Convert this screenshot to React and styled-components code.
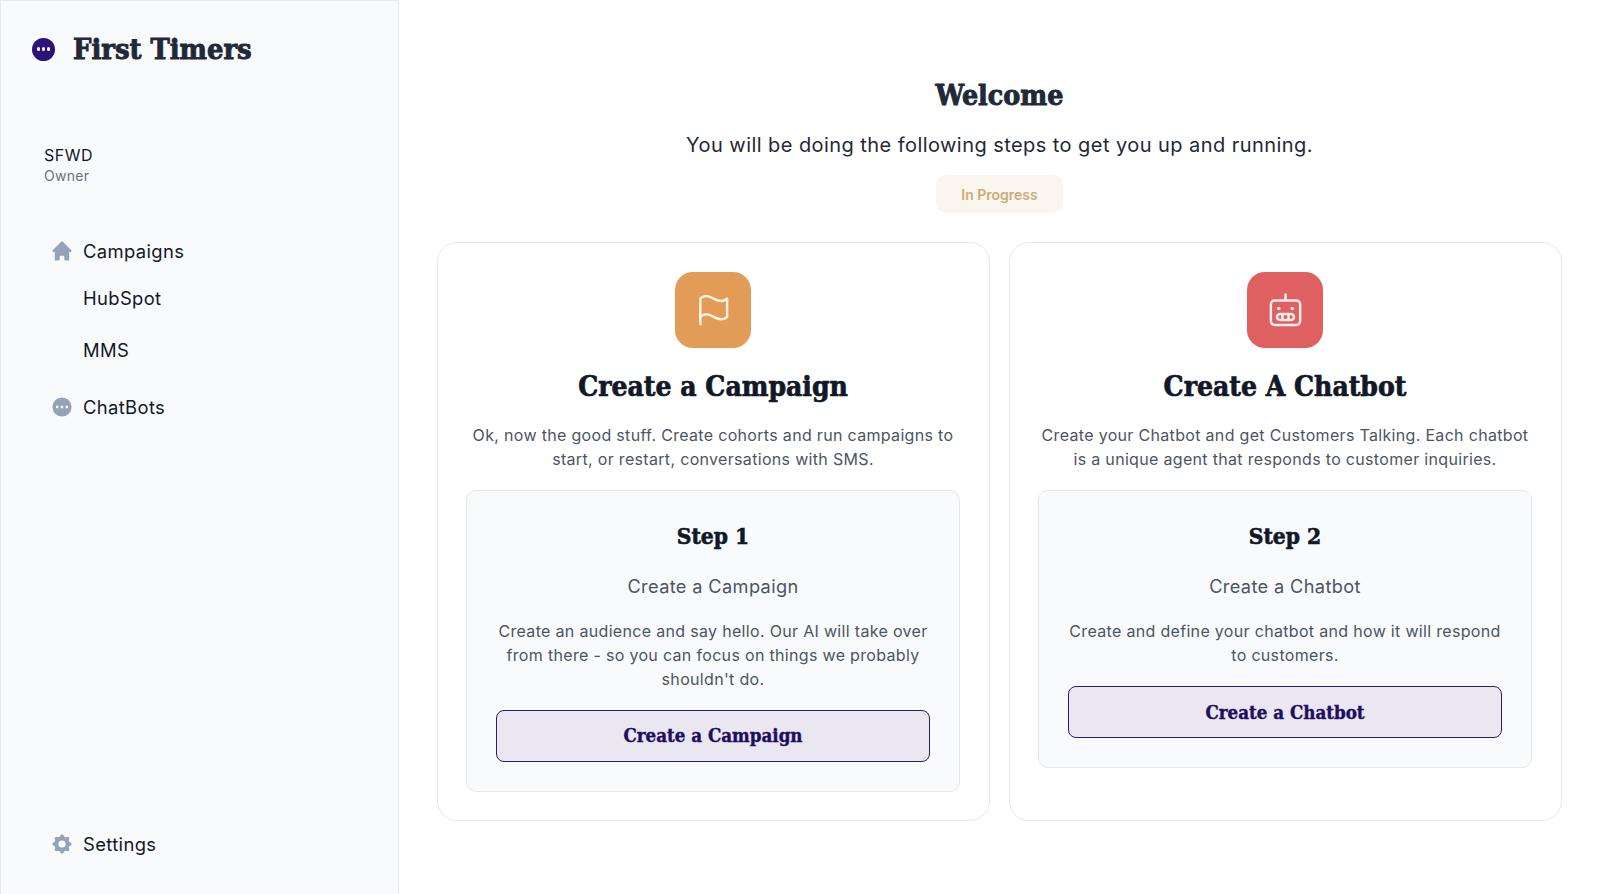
import styled, { createGlobalStyle } from "styled-components";
import { HiHome, HiDotsCircleHorizontal, HiCog } from "react-icons/hi";
import { PiFlag, PiRobot } from "react-icons/pi";

const display = `"DejaVu Serif Condensed", "DejaVu Serif", "Liberation Serif", serif`;

const GlobalStyle = createGlobalStyle`
  html, body {
    margin: 0;
    padding: 0;
    background: #fff;
    font-family: Inter, "Liberation Sans", sans-serif;
  }
  * { box-sizing: border-box; }
`;

const FlagIcon = styled(PiFlag)`
  margin: -2px 2px 0 0;
  color: #fdf3e6;
`;

const RobotIcon = styled(PiRobot)`
  margin-top: 2px;
  color: #fdecec;
`;

const cards = [
  {
    id: "campaign",
    color: "#e39c58",
    icon: <FlagIcon size={39} />,
    title: "Create a Campaign",
    intro: "Ok, now the good stuff. Create cohorts and run campaigns to start, or restart, conversations with SMS.",
    step: "Step 1",
    stepTitle: "Create a Campaign",
    text: "Create an audience and say hello. Our AI will take over from there - so you can focus on things we probably shouldn't do.",
    button: "Create a Campaign",
  },
  {
    id: "chatbot",
    color: "#de6060",
    icon: <RobotIcon size={39} />,
    title: "Create A Chatbot",
    intro: "Create your Chatbot and get Customers Talking. Each chatbot is a unique agent that responds to customer inquiries.",
    step: "Step 2",
    stepTitle: "Create a Chatbot",
    text: "Create and define your chatbot and how it will respond to customers.",
    button: "Create a Chatbot",
  },
];

export default function App() {
  return (
    <Page>
      <GlobalStyle />
      <Sidebar>
        <Brand>
          <LogoDot>
            <i />
            <i />
            <i />
          </LogoDot>
          <BrandName>First Timers</BrandName>
        </Brand>
        <Account>
          <AccountName>SFWD</AccountName>
          <AccountRole>Owner</AccountRole>
        </Account>
        <Nav>
          <NavItem>
            <HiHome size={24} />
            Campaigns
          </NavItem>
          <SubItem $top={21}>HubSpot</SubItem>
          <SubItem $top={23}>MMS</SubItem>
          <NavItem $top={30}>
            <HiDotsCircleHorizontal size={24} />
            ChatBots
          </NavItem>
        </Nav>
        <Footer>
          <NavItem>
            <HiCog size={24} />
            Settings
          </NavItem>
        </Footer>
      </Sidebar>
      <Main>
        <Heading>Welcome</Heading>
        <Lead>You will be doing the following steps to get you up and running.</Lead>
        <Badge>In Progress</Badge>
        <Cards>
          {cards.map((card) => (
            <Card key={card.id}>
              <IconTile $color={card.color}>{card.icon}</IconTile>
              <CardTitle>{card.title}</CardTitle>
              <CardIntro>{card.intro}</CardIntro>
              <StepBox>
                <StepLabel>{card.step}</StepLabel>
                <StepTitle>{card.stepTitle}</StepTitle>
                <StepText>{card.text}</StepText>
                <ActionButton type="button">{card.button}</ActionButton>
              </StepBox>
            </Card>
          ))}
        </Cards>
      </Main>
    </Page>
  );
}

const Page = styled.div`
  display: flex;
  width: 1600px;
  height: 894px;
  overflow: hidden;
  color: #111827;
`;

const Sidebar = styled.aside`
  display: flex;
  flex-direction: column;
  flex: 0 0 399px;
  padding: 33px 0 0 31px;
  background: #f9fafc;
  border: 1px solid #e5e9f0;
  border-bottom: 0;
`;

const Brand = styled.div`
  display: flex;
  align-items: center;
  gap: 18px;
  height: 30px;
`;

const LogoDot = styled.span`
  display: flex;
  align-items: center;
  justify-content: center;
  gap: 1.5px;
  width: 23px;
  height: 23px;
  border-radius: 50%;
  background: #2c1377;

  i {
    width: 3.5px;
    height: 3.5px;
    border-radius: 50%;
    background: #fff;
  }
`;

const BrandName = styled.h1`
  margin: 0;
  font-family: ${display};
  font-size: 28.8px;
  font-weight: 700;
  line-height: 30px;
  color: #1f2937;
  -webkit-text-stroke: 0.9px #1f2937;
  white-space: nowrap;
`;

const Account = styled.div`
  margin: 79px 0 0 12px;
`;

const AccountName = styled.div`
  font-size: 16px;
  line-height: 24px;
  letter-spacing: 0.03em;
  color: #111827;
`;

const AccountRole = styled.div`
  font-size: 14px;
  line-height: 18px;
  letter-spacing: 0.02em;
  color: #6b7280;
`;

const Nav = styled.nav`
  display: flex;
  flex-direction: column;
  margin: 54px 0 0 18px;
`;

const NavItem = styled.div`
  display: flex;
  align-items: center;
  gap: 9px;
  height: 24px;
  margin-top: ${(p) => p.$top || 0}px;
  font-size: 18.4px;
  line-height: 24px;
  letter-spacing: 0.02em;
  color: #111827;

  svg {
    flex: none;
    color: #94a3b8;
  }
`;

const SubItem = styled.div`
  height: 29px;
  margin-top: ${(p) => p.$top}px;
  padding-left: 33px;
  font-size: 18.4px;
  line-height: 29px;
  letter-spacing: 0.02em;
  color: #111827;
`;

const Footer = styled.div`
  margin: auto 0 38px 18px;
`;

const Main = styled.main`
  flex: 1;
  display: flex;
  flex-direction: column;
  align-items: center;
  padding: 77px 38px 0;
`;

const Heading = styled.h2`
  margin: 0;
  font-family: ${display};
  font-size: 28.3px;
  font-weight: 700;
  line-height: 36px;
  color: #1f2937;
  -webkit-text-stroke: 0.9px #1f2937;
`;

const Lead = styled.p`
  margin: 18px 0 0;
  font-size: 20px;
  line-height: 28px;
  letter-spacing: 0.022em;
  color: #1f2937;
`;

const Badge = styled.div`
  display: flex;
  align-items: center;
  justify-content: center;
  width: 127px;
  height: 38px;
  margin-top: 16px;
  border-radius: 10px;
  background: #faf6ee;
  font-size: 14px;
  font-weight: 600;
  color: #c9ad76;
`;

const Cards = styled.div`
  display: grid;
  grid-template-columns: 1fr 1fr;
  gap: 19px;
  width: 100%;
  margin-top: 29px;
`;

const Card = styled.section`
  display: flex;
  flex-direction: column;
  align-items: center;
  height: 579px;
  padding: 29px 29px 0 28px;
  background: #fff;
  border: 1px solid #e5e7eb;
  border-radius: 20px;
`;

const IconTile = styled.div`
  display: flex;
  align-items: center;
  justify-content: center;
  width: 76px;
  height: 76px;
  border-radius: 18px;
  background: ${(p) => p.$color};
`;

const CardTitle = styled.h3`
  margin: 20.5px 0 0;
  font-family: ${display};
  font-size: 28px;
  font-weight: 700;
  line-height: 36px;
  color: #111827;
  -webkit-text-stroke: 0.7px #111827;
`;

const CardIntro = styled.p`
  margin: 18.5px 0 0;
  font-size: 16px;
  line-height: 24px;
  letter-spacing: 0.02em;
  text-align: center;
  color: #4b5563;
`;

const StepBox = styled.div`
  display: flex;
  flex-direction: column;
  align-items: center;
  width: 100%;
  margin-top: 19px;
  padding: 29px;
  background: #f9fafb;
  border: 1px solid #e5e7eb;
  border-radius: 10px;
`;

const StepLabel = styled.h4`
  margin: 0;
  font-family: ${display};
  font-size: 22.6px;
  font-weight: 700;
  line-height: 32px;
  color: #111827;
  -webkit-text-stroke: 0.6px #111827;
`;

const StepTitle = styled.div`
  margin-top: 20px;
  font-size: 18.2px;
  line-height: 28px;
  letter-spacing: 0.02em;
  color: #4b5563;
`;

const StepText = styled.p`
  margin: 20px 0 0;
  font-size: 16px;
  line-height: 23.8px;
  letter-spacing: 0.02em;
  text-align: center;
  color: #4b5563;
`;

const ActionButton = styled.button`
  width: 100%;
  height: 52px;
  margin-top: 18.5px;
  background: #ebe7f1;
  border: 1px solid #2c1b6e;
  border-radius: 8px;
  font-family: ${display};
  font-size: 18.6px;
  font-weight: 700;
  color: #1e0e62;
  -webkit-text-stroke: 0.4px #1e0e62;
`;
